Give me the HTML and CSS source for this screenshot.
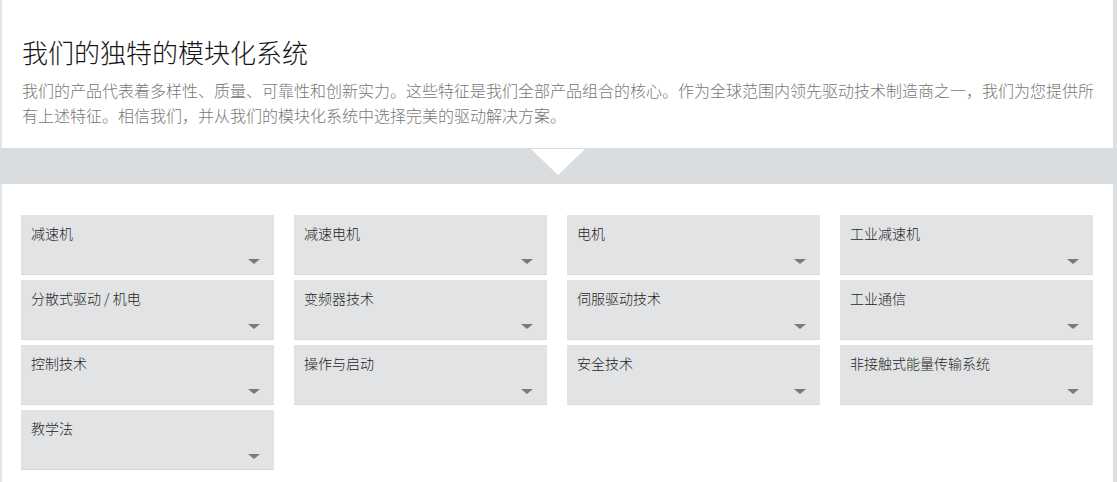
FILE: index.html
```html
<!DOCTYPE html>
<html lang="zh-CN">
<head>
<meta charset="utf-8">
<title>我们的独特的模块化系统</title>
<link rel="stylesheet" href="styles.css">
</head>
<body>
<div class="page">
  <section class="intro">
    <h1 class="title">我们的独特的模块化系统</h1>
    <p class="lead">我们的产品代表着多样性、质量、可靠性和创新实力。这些特征是我们全部产品组合的核心。作为全球范围内领先驱动技术制造商之一，我们为您提供所有上述特征。相信我们，并从我们的模块化系统中选择完美的驱动解决方案。</p>
  </section>
  <div class="band"><span class="notch"></span></div>
  <section class="grid">
    <div class="tile"><span class="label">减速机</span><span class="caret"></span></div>
    <div class="tile"><span class="label">减速电机</span><span class="caret"></span></div>
    <div class="tile"><span class="label">电机</span><span class="caret"></span></div>
    <div class="tile"><span class="label">工业减速机</span><span class="caret"></span></div>
    <div class="tile"><span class="label">分散式驱动 / 机电</span><span class="caret"></span></div>
    <div class="tile"><span class="label">变频器技术</span><span class="caret"></span></div>
    <div class="tile"><span class="label">伺服驱动技术</span><span class="caret"></span></div>
    <div class="tile"><span class="label">工业通信</span><span class="caret"></span></div>
    <div class="tile"><span class="label">控制技术</span><span class="caret"></span></div>
    <div class="tile"><span class="label">操作与启动</span><span class="caret"></span></div>
    <div class="tile"><span class="label">安全技术</span><span class="caret"></span></div>
    <div class="tile"><span class="label">非接触式能量传输系统</span><span class="caret"></span></div>
    <div class="tile"><span class="label">教学法</span><span class="caret"></span></div>
  </section>
</div>
</body>
</html>
```

FILE: styles.css
```css
html, body {
  margin: 0;
  padding: 0;
  background: #ffffff;
}

body {
  font-family: "Noto Sans CJK SC", "Noto Sans", "Liberation Sans", sans-serif;
  width: 1117px;
  height: 482px;
  overflow: hidden;
}

.page {
  box-sizing: border-box;
  width: 1117px;
  min-height: 482px;
  border-left: 2px solid #e4e5e6;
  border-right: 4px solid #dcdfe0;
}

.intro {
  padding: 35px 19px 20px 20px;
}

.title {
  margin: 0;
  font-size: 26px;
  line-height: 34px;
  font-weight: 300;
  color: #151515;
}

.lead {
  margin: 9px 0 0 0;
  font-size: 16px;
  line-height: 25px;
  font-weight: 300;
  color: #777777;
}

.band {
  height: 36px;
  margin: 0 -4px 0 -2px;
  background: #dadddf;
  display: flex;
  justify-content: center;
  padding-top: 1px;
  box-sizing: border-box;
}

.notch {
  width: 0;
  height: 0;
  border-left: 27px solid transparent;
  border-right: 27px solid transparent;
  border-top: 26px solid #ffffff;
  margin-left: -2px;
}

.grid {
  display: grid;
  grid-template-columns: repeat(4, 253px);
  column-gap: 20px;
  row-gap: 5px;
  padding: 31px 20px 0 19px;
}

.tile {
  box-sizing: border-box;
  height: 60px;
  background: #e2e3e5;
  border-bottom: 1px solid #d9dadc;
  padding: 10px 14px 10px 10px;
  display: flex;
  flex-direction: column;
  justify-content: space-between;
}

.label {
  font-size: 14px;
  line-height: 17px;
  font-weight: 300;
  color: #1f1f1f;
}

.caret {
  align-self: flex-end;
  width: 0;
  height: 0;
  border-left: 6px solid transparent;
  border-right: 6px solid transparent;
  border-top: 5px solid #7a7a7a;
}
```
